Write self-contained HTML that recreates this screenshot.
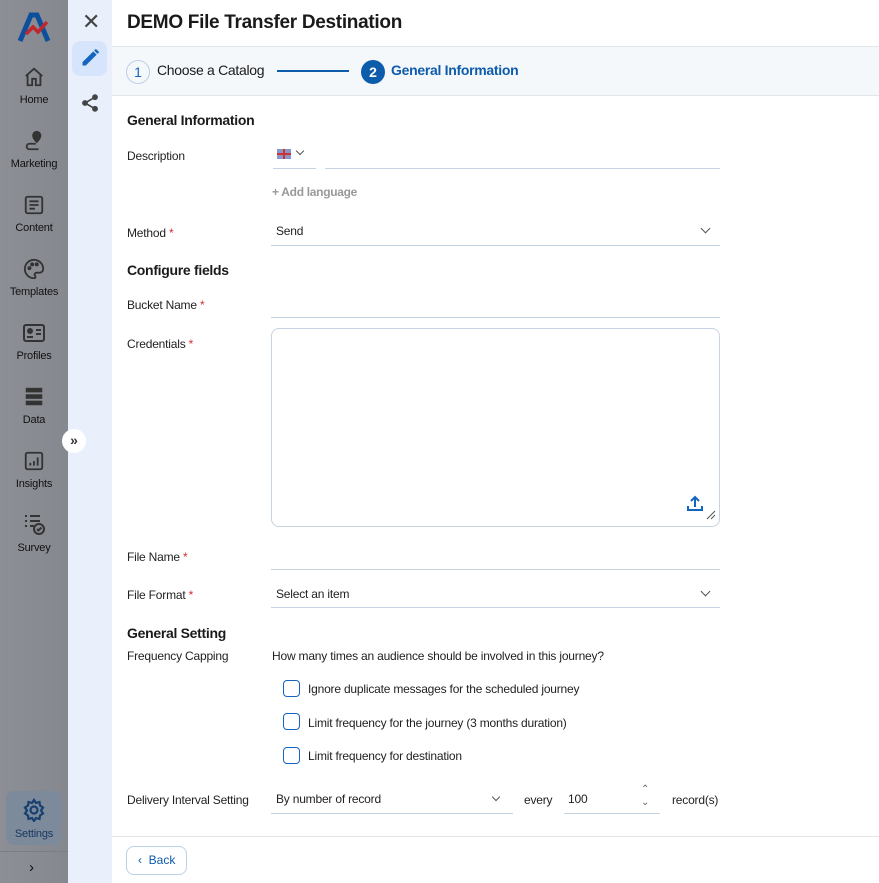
<!DOCTYPE html>
<html><head><meta charset="utf-8"><style>
*{box-sizing:border-box;margin:0;padding:0}
body{width:879px;height:883px;overflow:hidden;font-family:"Liberation Sans",sans-serif;background:#fff;position:relative;color:#1a1a1a}
.nav{position:absolute;left:0;top:0;width:68px;height:883px;background:linear-gradient(90deg,#8c8f95,#85888e)}
.ni{position:absolute;left:0;width:68px;text-align:center;font-size:11px;color:#111;letter-spacing:-0.2px}
.ni svg{display:block;margin:0 auto 6px}
.col2{position:absolute;left:68px;top:0;width:44px;height:883px;background:#e9f0fb}
.main{position:absolute;left:112px;top:0;right:0;height:883px}
h1{position:absolute;left:15px;top:12px;font-size:19px;font-weight:bold;letter-spacing:-0.3px}
.steps{position:absolute;left:0;top:46px;right:0;height:50px;background:#f5f8fb;border-top:1px solid #e2e6ea;border-bottom:1px solid #e2e6ea}
.lbl{position:absolute;left:15px;font-size:12px;color:#222;letter-spacing:-0.2px}
.req{color:#d32f2f}
.sec{position:absolute;left:15px;font-size:14px;font-weight:bold;letter-spacing:-0.3px}
.line{position:absolute;height:1px;background:#c5d3e3}
.val{position:absolute;font-size:12px;color:#222;letter-spacing:-0.2px}
.chev{position:absolute;width:7px;height:7px;border-right:1.5px solid #555;border-bottom:1.5px solid #555;transform:rotate(45deg)}
.cb{position:absolute;left:171px;width:17px;height:17px;border:1.5px solid #1565c0;border-radius:4px}
</style></head><body>
<div class="nav">
<svg style="position:absolute;left:17px;top:12px" width="34" height="30" viewBox="0 0 34 30"><path d="M3 29 L14 3 L20 3 L31 29" fill="none" stroke="#0d4f9c" stroke-width="5"/><path d="M9 22 L16 15 L21 20 L30 10" fill="none" stroke="#c0262d" stroke-width="3.5"/></svg>
<div class="ni" style="top:66px"><svg width="22" height="22" viewBox="0 0 24 24" fill="none" stroke="#333" stroke-width="2"><path d="M3 11 L12 3 L21 11 M5 9 V21 H10 V14 H14 V21 H19 V9"/></svg>Home</div>
<div class="ni" style="top:130px"><svg width="22" height="22" viewBox="0 0 24 24" fill="none" stroke="#333" stroke-width="2"><path d="M15 2a4 4 0 0 1 4 4c0 3-4 7-4 7s-4-4-4-7a4 4 0 0 1 4-4z" fill="#333"/><path d="M14 15H7a3 3 0 0 0 0 6h10"/></svg>Marketing</div>
<div class="ni" style="top:194px"><svg width="22" height="22" viewBox="0 0 24 24" fill="none" stroke="#333" stroke-width="2"><rect x="3" y="3" width="18" height="18" rx="2"/><path d="M7 8h10M7 12h10M7 16h6"/></svg>Content</div>
<div class="ni" style="top:258px"><svg width="22" height="22" viewBox="0 0 24 24" fill="none" stroke="#333" stroke-width="2"><path d="M12 2a10 10 0 0 0 0 20c2 0 2-2 1-3s0-3 2-3h3a4 4 0 0 0 4-4C22 6 17 2 12 2z"/><circle cx="7" cy="11" r="1.2" fill="#333"/><circle cx="10" cy="7" r="1.2" fill="#333"/><circle cx="15" cy="7" r="1.2" fill="#333"/></svg>Templates</div>
<div class="ni" style="top:322px"><svg width="24" height="22" viewBox="0 0 24 22" fill="none" stroke="#333" stroke-width="2"><rect x="2" y="3" width="20" height="16" rx="2"/><circle cx="8" cy="9" r="2" fill="#333"/><path d="M5 15h6M14 8h5M14 12h5" /></svg>Profiles</div>
<div class="ni" style="top:386px"><svg width="22" height="22" viewBox="0 0 24 24" fill="#333"><rect x="3" y="2" width="18" height="5"/><rect x="3" y="9" width="18" height="5"/><rect x="3" y="16" width="18" height="5"/></svg>Data</div>
<div class="ni" style="top:450px"><svg width="22" height="22" viewBox="0 0 24 24" fill="none" stroke="#333" stroke-width="2"><rect x="3" y="3" width="18" height="18" rx="2"/><path d="M8 17v-3M12 17v-5M16 17V8"/></svg>Insights</div>
<div class="ni" style="top:512px"><svg width="24" height="24" viewBox="0 0 24 24" fill="none" stroke="#333" stroke-width="2"><path d="M3 4h2M8 4h10M3 9h2M8 9h10M3 14h2M8 14h4"/><circle cx="17" cy="17" r="5"/><path d="M15 17l1.5 1.5 3-3"/></svg>Survey</div>
<div style="position:absolute;left:6px;top:791px;width:56px;height:54px;border-radius:8px;background:#7c8a9c"></div>
<div class="ni" style="top:798px;color:#17385f"><svg width="24" height="24" viewBox="0 0 24 24" fill="none" stroke="#17406f" stroke-width="2.2"><circle cx="12" cy="12" r="3.5"/><path d="M12 2l2 3 3.5-1 .5 3.5 3 2-2 3 2 3-3 2-.5 3.5-3.5-1-2 3-2-3-3.5 1-.5-3.5-3-2 2-3-2-3 3-2 .5-3.5 3.5 1z"/></svg>Settings</div>
<div style="position:absolute;left:0;top:851px;width:68px;height:1px;background:#7b7e84"></div>
<div style="position:absolute;left:29px;top:859px;font-size:15px;color:#111">›</div>
</div>
<div class="col2">
<div style="position:absolute;left:14px;top:12px;font-size:22px;color:#444;line-height:20px">✕</div>
<div style="position:absolute;left:4px;top:41px;width:35px;height:35px;border-radius:8px;background:#d6e5fb"></div>
<svg style="position:absolute;left:12px;top:48px" width="20" height="20" viewBox="0 0 24 24"><path d="M3 21v-4L16 4l4 4L7 21z" fill="#1565c0"/><path d="M17 3l2-2 4 4-2 2z" fill="#1565c0"/></svg>
<svg style="position:absolute;left:12px;top:93px" width="20" height="20" viewBox="0 0 24 24" fill="#444" stroke="#444" stroke-width="2"><circle cx="18" cy="5" r="2.5"/><circle cx="6" cy="12" r="2.5"/><circle cx="18" cy="19" r="2.5"/><path d="M18 5L6 12l12 7" fill="none"/></svg>
</div>
<div style="position:absolute;left:62px;top:429px;width:24px;height:24px;border-radius:12px;background:#fff;font-size:14px;text-align:center;line-height:22px;color:#333;font-weight:bold">»</div>
<div class="main">
<h1>DEMO File Transfer Destination</h1>
<div class="steps">
<div style="position:absolute;left:14px;top:13px;width:24px;height:24px;border:1px solid #bcd0e6;border-radius:12px;text-align:center;line-height:22px;font-size:14px;color:#1565c0">1</div>
<div style="position:absolute;left:45px;top:15px;font-size:14px;letter-spacing:-0.3px">Choose a Catalog</div>
<div style="position:absolute;left:165px;top:23px;width:72px;height:2px;background:#0d5bab"></div>
<div style="position:absolute;left:249px;top:13px;width:24px;height:24px;background:#0d5bab;border-radius:12px;text-align:center;line-height:24px;font-size:14px;color:#fff;font-weight:bold">2</div>
<div style="position:absolute;left:279px;top:15px;font-size:14px;color:#0d5bab;letter-spacing:-0.3px;font-weight:bold">General Information</div>
</div>
<div class="sec" style="top:112px">General Information</div>
<div class="lbl" style="top:149px">Description</div>
<div style="position:absolute;left:165px;top:149px;width:14px;height:10px;background:linear-gradient(#c33 0 0) center/100% 2px no-repeat,linear-gradient(#c33 0 0) center/2px 100% no-repeat,#8a95c8"></div>
<div class="chev" style="left:185px;top:148px;width:6px;height:6px"></div>
<div class="line" style="left:161px;top:168px;width:43px"></div>
<div class="line" style="left:213px;top:168px;width:395px"></div>
<div style="position:absolute;left:160px;top:185px;font-size:12px;color:#999;font-weight:bold;letter-spacing:-0.3px">+ Add language</div>
<div class="lbl" style="top:226px">Method <span class="req">*</span></div>
<div class="val" style="left:164px;top:224px">Send</div>
<div class="chev" style="left:590px;top:225px"></div>
<div class="line" style="left:159px;top:245px;width:449px"></div>
<div class="sec" style="top:262px">Configure fields</div>
<div class="lbl" style="top:298px">Bucket Name <span class="req">*</span></div>
<div class="line" style="left:159px;top:317px;width:449px"></div>
<div class="lbl" style="top:337px">Credentials <span class="req">*</span></div>
<div style="position:absolute;left:159px;top:328px;width:449px;height:199px;border:1px solid #c5d3e3;border-radius:8px"></div>
<svg style="position:absolute;left:574px;top:494px" width="18" height="18" viewBox="0 0 18 18" fill="none" stroke="#1565c0" stroke-width="2"><path d="M9 13V3M5 7l4-4 4 4M2 12v4h14v-4"/></svg>
<svg style="position:absolute;left:594px;top:510px" width="10" height="10" viewBox="0 0 10 10" stroke="#555"><path d="M1 9L9 1M5 9L9 5"/></svg>
<div class="lbl" style="top:550px">File Name <span class="req">*</span></div>
<div class="line" style="left:159px;top:569px;width:449px"></div>
<div class="lbl" style="top:588px">File Format <span class="req">*</span></div>
<div class="val" style="left:164px;top:587px">Select an item</div>
<div class="chev" style="left:590px;top:588px"></div>
<div class="line" style="left:159px;top:607px;width:449px"></div>
<div class="sec" style="top:625px">General Setting</div>
<div class="lbl" style="top:649px">Frequency Capping</div>
<div class="val" style="left:160px;top:649px">How many times an audience should be involved in this journey?</div>
<div class="cb" style="top:680px"></div><div class="val" style="left:196px;top:682px">Ignore duplicate messages for the scheduled journey</div>
<div class="cb" style="top:713px"></div><div class="val" style="left:196px;top:716px">Limit frequency for the journey (3 months duration)</div>
<div class="cb" style="top:747px"></div><div class="val" style="left:196px;top:749px">Limit frequency for destination</div>
<div class="lbl" style="top:793px">Delivery Interval Setting</div>
<div class="val" style="left:164px;top:792px">By number of record</div>
<div class="chev" style="left:381px;top:794px;width:6px;height:6px"></div>
<div class="line" style="left:159px;top:813px;width:242px"></div>
<div class="val" style="left:412px;top:793px">every</div>
<div class="val" style="left:456px;top:792px">100</div>
<div style="position:absolute;left:529px;top:783px;font-size:10px;color:#666;line-height:13px">⌃<br>⌄</div>
<div class="line" style="left:452px;top:813px;width:96px"></div>
<div class="val" style="left:560px;top:793px">record(s)</div>
<div style="position:absolute;left:0;right:0;top:836px;height:1px;background:#e2e6ea"></div>
<div style="position:absolute;left:14px;top:846px;width:61px;height:29px;border:1px solid #bcd0e6;border-radius:8px;font-size:12px;color:#0d5bab;line-height:27px;padding-left:11px">‹&nbsp;&nbsp;Back</div>
</div>
</body></html>
